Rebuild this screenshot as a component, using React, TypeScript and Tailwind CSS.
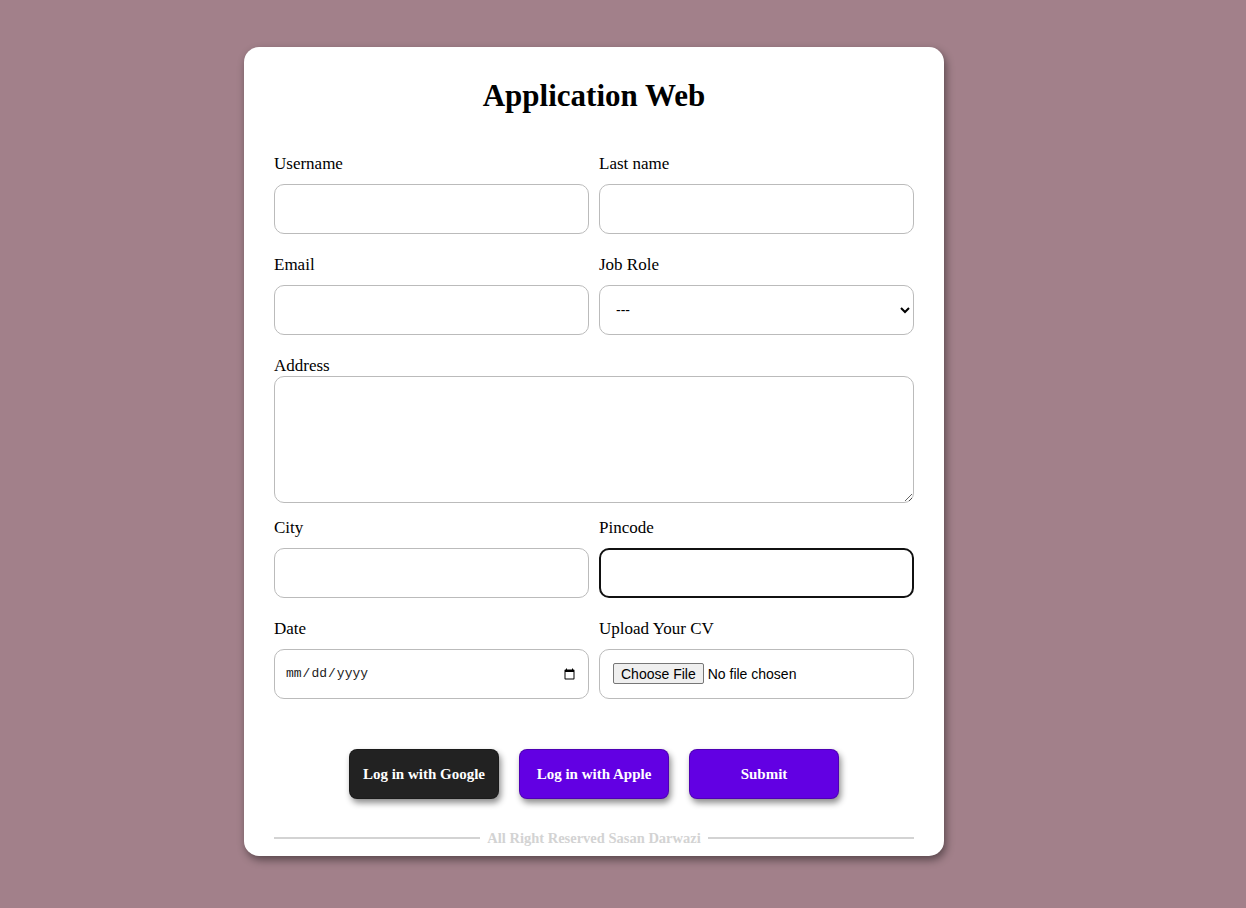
import React from "react";

const serif = "font-['Liberation_Serif','Times_New_Roman',serif]";
const inputBase =
  "block w-full h-[50px] rounded-[10px] border border-[#bbb] bg-white px-[10px] outline-none";

const Label: React.FC<{ text: string; spaced?: boolean }> = ({ text, spaced = true }) => (
  <label className={`block h-5 leading-5 text-[17px] text-black ${spaced ? "mb-[10px]" : ""}`}>
    {text}
  </label>
);

export default function App() {
  return (
    <div className={`min-h-screen bg-[#a2808a] pt-[47px] pb-[52px] pl-[244px] ${serif}`}>
      <form
        className="w-[700px] rounded-[15px] bg-white px-[30px] pt-[30px] pb-[9px] shadow-[2px_4px_8px_rgba(0,0,0,0.45)]"
        onSubmit={(e) => e.preventDefault()}
      >
        {/* Title */}
        <h1 className="text-center text-[31px] font-bold leading-[37px] mb-[40px] text-black">
          Application Web
        </h1>

        {/* Row 1 */}
        <div className="grid grid-cols-2 gap-x-[10px]">
          <div>
            <Label text="Username" />
            <input type="text" className={inputBase} />
          </div>
          <div>
            <Label text="Last name" />
            <input type="text" className={inputBase} />
          </div>
        </div>

        {/* Row 2 */}
        <div className="grid grid-cols-2 gap-x-[10px] mt-[21px]">
          <div>
            <Label text="Email" />
            <input type="email" className={inputBase} />
          </div>
          <div>
            <Label text="Job Role" />
            <select
              className={`${inputBase} font-['Liberation_Sans',Arial,sans-serif] text-[14px] pl-[12px] pr-[4px] text-black`}
              defaultValue=""
            >
              <option value="">---</option>
              <option value="dev">Developer</option>
              <option value="design">Designer</option>
            </select>
          </div>
        </div>

        {/* Address */}
        <div className="mt-[21px]">
          <Label text="Address" spaced={false} />
          <textarea className="block w-full h-[127px] rounded-[10px] border border-[#bbb] bg-white px-[10px] py-2 outline-none" />
        </div>

        {/* Row 3 */}
        <div className="grid grid-cols-2 gap-x-[10px] mt-[15px]">
          <div>
            <Label text="City" />
            <input type="text" className={inputBase} />
          </div>
          <div>
            <Label text="Pincode" />
            <input
              type="text"
              className="block w-full h-[50px] rounded-[10px] border-2 border-[#111] bg-white px-[10px] outline-none"
            />
          </div>
        </div>

        {/* Row 4 */}
        <div className="grid grid-cols-2 gap-x-[10px] mt-[21px]">
          <div>
            <Label text="Date" />
            <input
              type="date"
              className={`${inputBase} font-['Liberation_Mono','Courier_New',monospace] text-[13px] text-[#222]`}
            />
          </div>
          <div>
            <Label text="Upload Your CV" />
            <input
              type="file"
              className={`${inputBase} pl-[13px] pt-[13px] font-['Liberation_Sans',Arial,sans-serif] text-[14px] text-black file:mr-[4px] file:h-[21px] file:rounded-[2px] file:border file:border-[#767676] file:bg-[#efefef] file:px-[7px] file:text-[14px] file:text-black`}
            />
          </div>
        </div>

        {/* Buttons */}
        <div className="flex justify-center gap-[20px] mt-[50px]">
          <button
            type="button"
            className="w-[150px] h-[50px] rounded-[8px] border border-black/20 bg-[#222] text-[15px] font-bold text-white shadow-[2px_4px_6px_rgba(0,0,0,0.45)]"
          >
            Log in with Google
          </button>
          <button
            type="button"
            className="w-[150px] h-[50px] rounded-[8px] border border-black/20 bg-[#6200e3] text-[15px] font-bold text-white shadow-[2px_4px_6px_rgba(0,0,0,0.45)]"
          >
            Log in with Apple
          </button>
          <button
            type="submit"
            className="w-[150px] h-[50px] rounded-[8px] border border-black/20 bg-[#6200e3] text-[15px] font-bold text-white shadow-[2px_4px_6px_rgba(0,0,0,0.45)]"
          >
            Submit
          </button>
        </div>

        {/* Footer */}
        <div className="flex items-center gap-[7px] mt-[30px] h-[18px]">
          <div className="flex-1 h-[2px] bg-[#d3d3d3]" />
          <span className="text-[14.5px] font-bold leading-[18px] text-[#d3d3d3]">
            All Right Reserved Sasan Darwazi
          </span>
          <div className="flex-1 h-[2px] bg-[#d3d3d3]" />
        </div>
      </form>
    </div>
  );
}
